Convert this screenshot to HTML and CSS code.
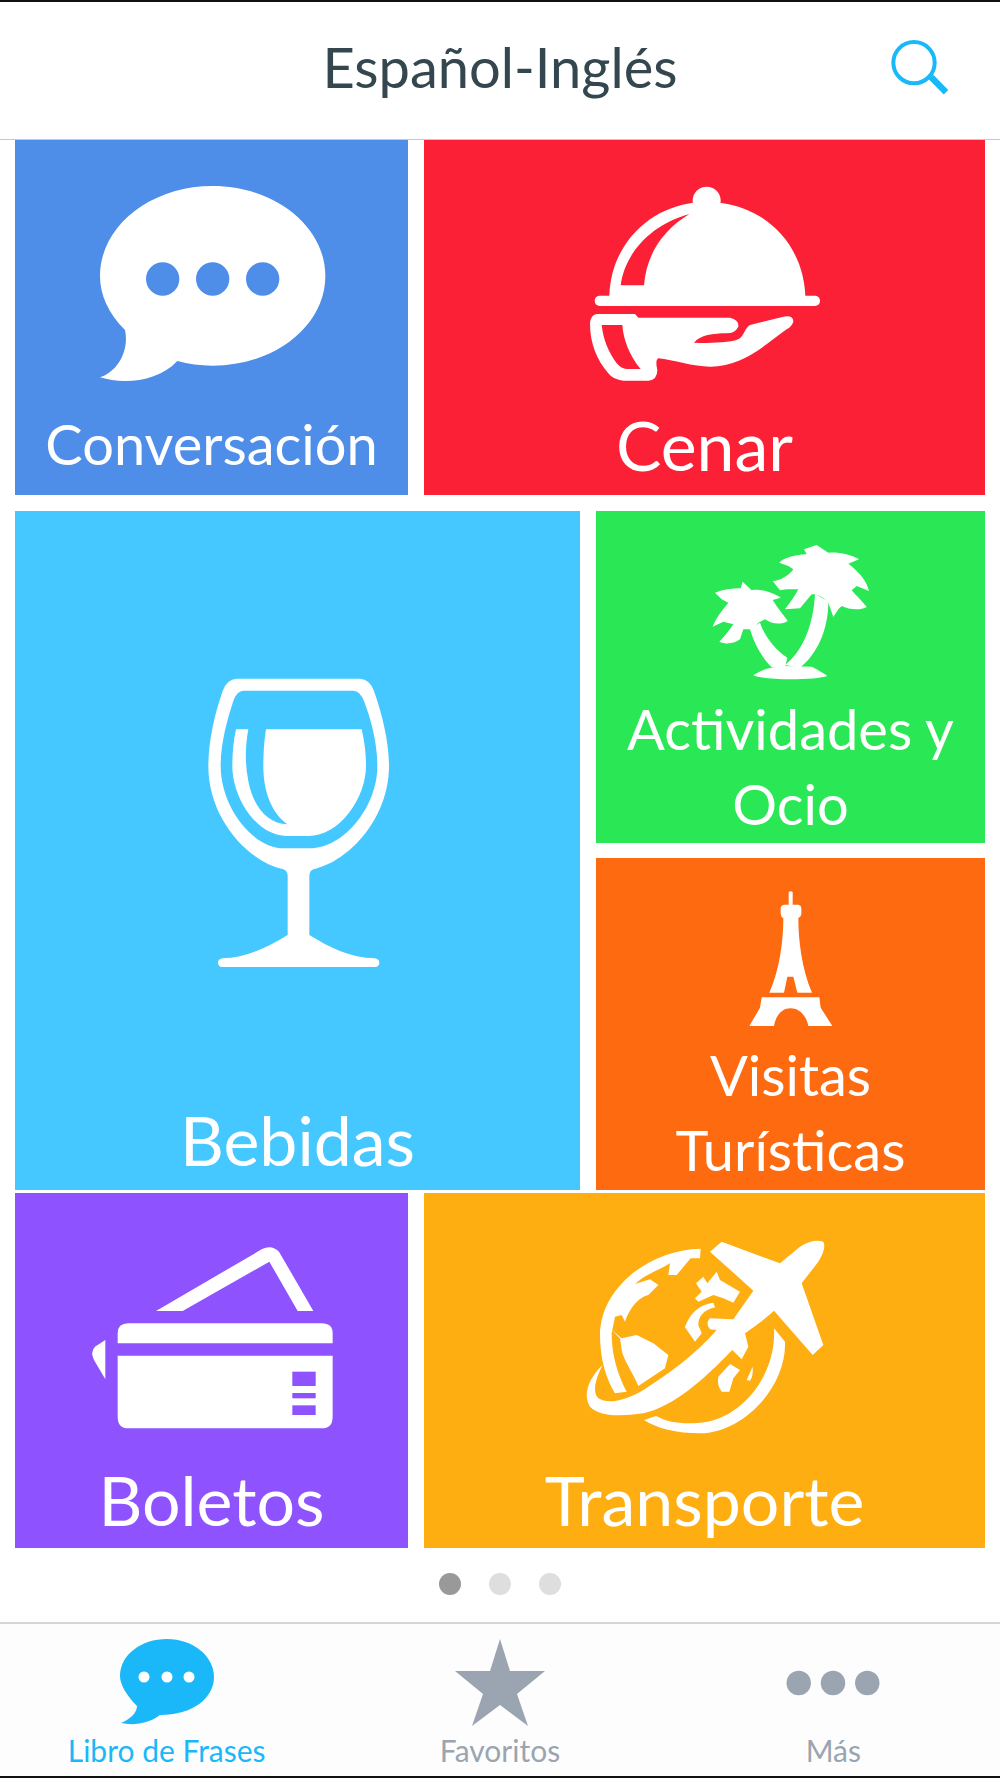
FILE: index.html
```html
<!DOCTYPE html>
<html lang="es">
<head>
<meta charset="utf-8">
<title>Español-Inglés</title>
<link rel="stylesheet" href="styles.css">
</head>
<body>
<div class="screen">
  <header class="topbar">
    <h1 class="title">Español-Inglés</h1>
    <svg class="search" viewBox="0 0 240 210" aria-hidden="true">
      <circle cx="102" cy="95" r="62" fill="none" stroke="#1ab8f8" stroke-width="12"/>
      <path d="M153 138L198 184" stroke="#1ab8f8" stroke-width="19" fill="none"/>
    </svg>
  </header>

  <main class="board">
    <section class="row row-a">
      <article class="tile blue">
        <svg class="ico ico-bubble" viewBox="0 0 780 660" aria-hidden="true">
          <path fill="#fff" d="M105 480C55 430 30 375 30 318C30 170 180 48 368 48C555 48 706 170 706 318C706 467 555 587 368 587C330 587 295 582 262 573C205 635 100 645 30 622C85 605 118 540 105 480Z"/>
          <circle cx="218" cy="327" r="50" fill="#4e8ee8"/>
          <circle cx="368" cy="327" r="50" fill="#4e8ee8"/>
          <circle cx="518" cy="327" r="50" fill="#4e8ee8"/>
        </svg>
        <h2 class="label label-md">Conversación</h2>
      </article>
      <article class="tile red">
        <svg class="ico ico-cloche" viewBox="0 0 780 660" aria-hidden="true">
          <circle cx="380" cy="92" r="42" fill="#fff"/>
          <path fill="#fff" d="M88 378C92 225 205 115 340 98H420C560 115 670 225 676 378Z"/>
          <path fill="#fc2036" d="M122 346C135 250 210 165 328 132C250 180 200 250 192 346Z"/>
          <rect x="44" y="377" width="676" height="31" rx="15" fill="#fff"/>
          <path fill="#fff" d="M50 432H165L175 443H450Q478 450 475 470Q465 490 440 490C400 490 360 495 342 518C400 520 460 518 480 505C495 490 495 475 510 465L610 440Q640 435 640 455Q635 470 620 478C560 520 490 590 390 590C340 590 280 570 235 565Q225 570 232 600Q232 630 205 632H130Q100 630 85 610C50 570 30 520 30 460Q32 435 50 432Z"/>
          <path fill="#fc2036" d="M65 465H127C130 510 150 560 182 597H140Q125 597 110 580C85 545 70 510 65 465Z"/>
        </svg>
        <h2 class="label label-lg">Cenar</h2>
      </article>
    </section>

    <section class="row row-b">
      <article class="tile sky">
        <svg class="ico ico-glass" viewBox="0 0 720 1020" aria-hidden="true">
          <path fill="#fff" d="M170 83H540Q570 85 582 120C610 200 627 280 627 345C627 500 510 630 400 655Q388 660 388 675V852C450 890 510 920 585 922Q598 925 598 935Q598 947 585 948H127Q114 947 114 935Q114 925 127 922C200 920 260 890 323 852V675Q323 660 310 655C200 630 85 500 85 345C85 280 100 200 128 120Q140 85 170 83Z"/>
          <path fill="#45c8ff" d="M190 119H520Q540 120 552 150C575 210 592 280 592 345C592 470 490 592 390 592H310C220 592 122 470 122 345C122 280 140 210 160 150Q170 120 190 119Z"/>
          <path fill="#fff" d="M258 235H545C555 280 558 310 558 345C558 440 480 555 385 555H320C230 555 157 440 157 345C157 310 160 270 168 235H205C195 290 195 340 205 390C220 470 265 518 322 520C280 490 250 430 250 345C250 310 252 270 258 235Z"/>
        </svg>
        <h2 class="label label-lg">Bebidas</h2>
      </article>
      <div class="stack">
        <article class="tile green">
          <svg class="ico ico-palm" viewBox="0 0 540 480" aria-hidden="true">
            <path fill="#fff" d="M350 42L385 65C410 62 450 68 477 85L445 98C480 125 500 150 507 180L470 165L455 178C470 195 490 215 500 228C480 240 445 235 425 225L415 235L400 258L385 215C370 195 345 190 335 190L300 232L255 235C270 215 285 195 295 175L260 175L240 178L218 150C240 150 265 135 280 115L265 105L238 95C250 82 280 72 320 70L312 55Z"/>
            <path fill="#fff" d="M345 190C340 280 310 360 255 402L300 410C350 370 385 300 385 210Z"/>
            <path fill="#fff" d="M128 152L155 178C180 172 220 185 242 200L218 207C235 235 250 250 263 270C245 282 215 280 195 265L175 275L160 295L130 295L120 325C100 340 75 340 58 332C75 315 90 295 100 280L70 272L38 287C50 255 70 235 85 215L65 205L45 185C70 175 95 172 122 172Z"/>
            <path fill="#fff" d="M150 295C165 345 190 385 215 408L255 408L262 380C230 360 195 320 180 275Z"/>
            <path fill="#fff" d="M160 433C185 415 215 407 250 405L335 407C350 415 370 425 382 435C350 447 200 450 160 433Z"/>
          </svg>
          <h2 class="label label-md label-two">Actividades y Ocio</h2>
        </article>
        <article class="tile orange">
          <svg class="ico ico-tower" viewBox="0 0 330 480" aria-hidden="true">
            <path fill="#fff" d="M176 48Q182 44 188 48V86H205Q214 88 214 98V115Q214 122 205 127C205 190 215 280 246 350H202L190 302H172L162 350H118C150 280 160 190 160 127Q152 122 152 110V98Q152 88 162 86H176Z"/>
            <path fill="#fff" d="M95 364H268L272 395L307 450H235C228 415 205 397 182 397C158 397 138 415 132 450H58L90 395Z"/>
          </svg>
          <h2 class="label label-md label-two">Visitas Turísticas</h2>
        </article>
      </div>
    </section>

    <section class="row row-a">
      <article class="tile purple">
        <svg class="ico ico-ticket" viewBox="0 0 810 690" aria-hidden="true">
          <path fill="#fff" d="M228 243L545 58Q575 42 597 65L700 243H653L568 95L308 243Z"/>
          <path fill="#fff" d="M113 340V310Q113 280 145 280H725Q758 280 758 310V340Z"/>
          <path fill="#fff" d="M113 377H758V560Q758 595 725 595H145Q113 595 113 560Z"/>
          <rect x="637" y="425" width="70" height="43" fill="#8f52ff"/>
          <rect x="637" y="489" width="70" height="16" fill="#8f52ff"/>
          <rect x="637" y="526" width="70" height="29" fill="#8f52ff"/>
          <path fill="#fff" d="M76 330V448L42 390Q30 365 45 350Z"/>
        </svg>
        <h2 class="label label-lg">Boletos</h2>
      </article>
      <article class="tile amber">
        <svg class="ico ico-globe" viewBox="0 0 840 720" aria-hidden="true">
          <path fill="#fff" d="M392 86C230 90 90 210 90 345C90 420 110 480 135 520L170 515C140 460 125 400 125 340L135 290L155 285L165 305C180 260 210 230 235 225L250 210L265 195L240 178L195 192C230 160 270 150 300 130L295 165L320 165L345 135L362 115L390 115Z"/>
          <path fill="#fff" d="M125 330L155 355L200 345L250 370L295 405L285 445L205 498C190 460 160 420 155 390L150 355Z"/>
          <path fill="#fff" d="M378 190L400 170L412 190L440 155L450 180L510 215L490 248L460 235L430 225L385 245L375 235L395 215Z"/>
          <path fill="#fff" d="M345 322C355 290 380 255 430 248L435 262C400 270 385 290 385 315L395 340L375 365Z"/>
          <path fill="#fff" d="M445 470L480 432L510 450L490 475L478 515L455 515Q440 495 445 470Z"/>
          <path fill="#fff" d="M530 480L548 440Q550 470 540 482Z"/>
          <path fill="#fff" d="M612 325L645 365C650 500 520 640 390 640C320 640 260 625 222 600L258 588C300 610 340 612 390 608C510 600 620 470 612 325Z"/>
          <path fill="#fff" d="M455 65L630 130L690 80Q730 55 760 65Q770 85 745 125L695 190L760 375L728 405L612 272C570 310 545 325 525 340L535 380L515 418L487 390C400 480 310 560 220 580C150 590 90 590 60 560C40 530 50 480 98 435C70 490 70 520 85 535C115 555 170 540 220 510C300 460 380 400 440 330L420 328Q405 310 420 295L490 298L550 212L420 95Z"/>
        </svg>
        <h2 class="label label-lg">Transporte</h2>
      </article>
    </section>
  </main>

  <div class="pager">
    <span class="dot dot-on"></span>
    <span class="dot"></span>
    <span class="dot"></span>
  </div>

  <nav class="tabs">
    <a class="tab tab-on">
      <svg class="tab-ico" viewBox="0 0 94 87" aria-hidden="true">
        <path fill="#1ab8f8" d="M17 67C6 56 0 45 0 37C0 16 21 0 47 0C73 0 94 17 94 38C94 59 73 76 40 76C30 84 14 87 1 84C10 80 17 74 17 67Z"/>
        <circle cx="24" cy="38" r="5.5" fill="#fff"/>
        <circle cx="47" cy="38" r="5.5" fill="#fff"/>
        <circle cx="69" cy="38" r="5.5" fill="#fff"/>
      </svg>
      <span class="tab-label">Libro de Frases</span>
    </a>
    <a class="tab">
      <svg class="tab-ico" viewBox="0 0 94 87" aria-hidden="true">
        <path fill="#9aa5b1" d="M47 0L57 32H92L64 55L75 87L47 66L19 87L30 55L2 32H37Z"/>
      </svg>
      <span class="tab-label">Favoritos</span>
    </a>
    <a class="tab">
      <svg class="tab-ico" viewBox="0 0 96 87" aria-hidden="true">
        <circle cx="13" cy="44" r="12.5" fill="#9aa5b1"/>
        <circle cx="48" cy="44" r="12.5" fill="#9aa5b1"/>
        <circle cx="83" cy="44" r="12.5" fill="#9aa5b1"/>
      </svg>
      <span class="tab-label">Más</span>
    </a>
  </nav>
</div>
</body>
</html>
```
FILE: styles.css
```css
* { box-sizing: border-box; }
html, body { margin: 0; padding: 0; background: #fff; }
body { font-family: "Lato", "Open Sans", sans-serif; }

.screen {
  width: 1000px;
  height: 1778px;
  display: flex;
  flex-direction: column;
  border-top: 2px solid #111;
  border-bottom: 2px solid #111;
  overflow: hidden;
}

.topbar {
  flex: 0 0 138px;
  display: grid;
  grid-template-columns: 1fr auto 1fr;
  align-items: center;
  border-bottom: 1px solid #c8c8c8;
}
.title {
  grid-column: 2;
  margin: 0 0 8px;
  font-size: 56px;
  font-weight: 400;
  line-height: 1.2;
  color: #34474f;
}
.search {
  grid-column: 3;
  justify-self: end;
  width: 80px;
  height: 70px;
  margin: 0 40px 10px 0;
}

.board {
  display: flex;
  flex-direction: column;
  gap: 15.5px;
  padding: 0 15px;
}
.row { display: grid; gap: 16px; }
.row-a { grid-template-columns: 393px 561px; height: 355px; }
.row-b { grid-template-columns: 565px 389px; height: 667px; }
.stack { display: flex; flex-direction: column; gap: 15px; }
.stack .tile { flex: 1; }

.tile {
  display: flex;
  flex-direction: column;
  overflow: hidden;
  color: #fff;
}
.blue { background: #4e8ee8; }
.red { background: #fc2036; }
.sky { background: #45c8ff; }
.green { background: #2ae855; }
.orange { background: #fe6a0f; }
.purple { background: #8f52ff; }
.amber { background: #feae10; }

.ico { display: block; flex: none; }
.ico-bubble { width: 260px; height: 220px; margin: 30px 0 0 75px; }
.ico-cloche { width: 260px; height: 220px; margin: 30px 0 0 156px; }
.ico-glass { width: 240px; height: 340px; margin: 140px 0 0 165px; }
.ico-palm { width: 180px; height: 160px; margin: 20px 0 0 104px; }
.ico-tower { width: 110px; height: 160px; margin: 18px 0 0 134px; }
.ico-ticket { width: 270px; height: 230px; margin: 37px 0 0 65px; }
.ico-globe { width: 280px; height: 240px; margin: 27px 0 0 146px; }

.label {
  margin: auto 0 0;
  font-weight: 400;
  text-align: center;
}
.label-md { font-size: 56px; line-height: 75px; padding-bottom: 14px; }
.label-lg { font-size: 68px; line-height: 80px; padding-bottom: 10px; }
.label-two { padding: 0 20px 3px; }

.pager {
  flex: 0 0 74px;
  margin-top: 0;
  padding-bottom: 2px;
  display: flex;
  justify-content: center;
  align-items: center;
  gap: 28px;
}
.dot { width: 22px; height: 22px; border-radius: 50%; background: #dedede; }
.dot-on { background: #999; }

.tabs {
  flex: 1;
  display: grid;
  grid-template-columns: repeat(3, 1fr);
  border-top: 2px solid #d6d6d6;
  background: #fdfdfd;
}
.tab {
  display: flex;
  flex-direction: column;
  align-items: center;
  padding-top: 15px;
  color: #9aa5b1;
}
.tab-on { color: #1ab8f8; }
.tab-ico { width: 94px; height: 87px; display: block; }
.tab-label { font-size: 30px; line-height: 36px; margin-top: 6px; }
```
